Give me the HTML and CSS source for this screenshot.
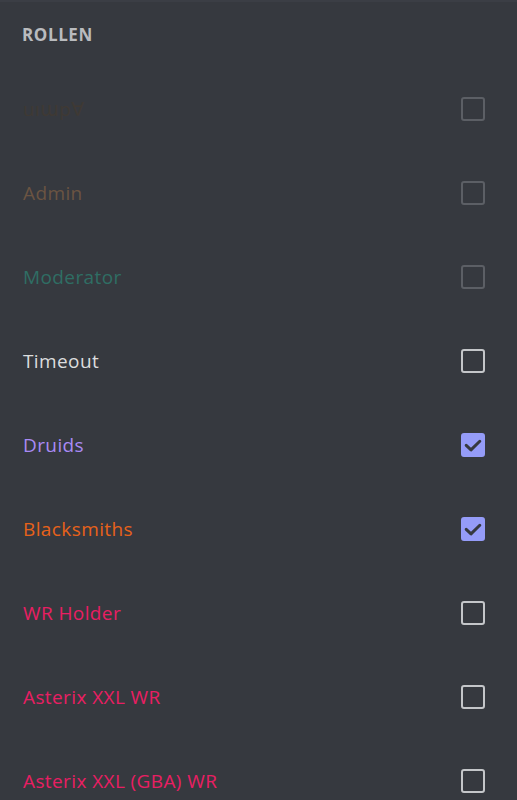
FILE: index.html
```html
<!DOCTYPE html>
<html lang="de">
<head>
<meta charset="utf-8">
<link rel="stylesheet" href="styles.css">
</head>
<body>
<div class="topline"></div>
<section class="panel">
  <h2 class="title">ROLLEN</h2>
  <ul class="roles">
    <li class="role disabled"><span class="name c-upside">uıɯp∀</span><span class="box"></span></li>
    <li class="role disabled"><span class="name c-admin">Admin</span><span class="box"></span></li>
    <li class="role disabled"><span class="name c-mod">Moderator</span><span class="box"></span></li>
    <li class="role"><span class="name c-timeout">Timeout</span><span class="box"></span></li>
    <li class="role"><span class="name c-druid">Druids</span><span class="box checked"><svg viewBox="0 0 24 24" width="24" height="24"><path d="M5.2 12.4l4.8 4.5 8.8-8.6" fill="none" stroke="#36393f" stroke-width="3" stroke-linecap="round" stroke-linejoin="round"/></svg></span></li>
    <li class="role"><span class="name c-smith">Blacksmiths</span><span class="box checked"><svg viewBox="0 0 24 24" width="24" height="24"><path d="M5.2 12.4l4.8 4.5 8.8-8.6" fill="none" stroke="#36393f" stroke-width="3" stroke-linecap="round" stroke-linejoin="round"/></svg></span></li>
    <li class="role"><span class="name c-wr">WR Holder</span><span class="box"></span></li>
    <li class="role"><span class="name c-wr">Asterix XXL WR</span><span class="box"></span></li>
    <li class="role"><span class="name c-wr">Asterix XXL (GBA) WR</span><span class="box"></span></li>
  </ul>
</section>
</body>
</html>
```
FILE: styles.css
```css
html, body {
  margin: 0;
  padding: 0;
  background: #36393f;
  height: 100%;
  overflow: hidden;
}
body {
  font-family: "Open Sans", "DejaVu Sans", sans-serif;
}
.topline {
  height: 2px;
  background: #3b3e45;
}
.panel {
  padding: 0 32px 0 22px;
}
.title {
  margin: 0;
  height: 65px;
  display: flex;
  align-items: center;
  font-size: 17px;
  font-weight: 700;
  color: #b9bbbe;
  letter-spacing: 0.6px;
}
.roles {
  list-style: none;
  margin: 0;
  padding: 0;
}
.role {
  height: 84px;
  display: flex;
  align-items: center;
  justify-content: space-between;
}
.name {
  font-size: 19px;
  letter-spacing: 0.4px;
  padding-left: 1px;
}
.c-upside { color: #3f3934; }
.c-admin { color: #6b5442; }
.c-mod { color: #2f6e64; }
.c-timeout { color: #dcddde; }
.c-druid { color: #a98af5; }
.c-smith { color: #e8621a; }
.c-wr { color: #e91e63; }
.box {
  width: 24px;
  height: 24px;
  box-sizing: border-box;
  border: 2px solid #c4c6c9;
  border-radius: 3px;
  display: flex;
}
.disabled .box {
  border-color: #5c5f65;
}
.box.checked {
  background: #959cf8;
  border-color: #959cf8;
  position: relative;
}
.box.checked svg {
  position: absolute;
  left: -2px;
  top: -2px;
}
```
